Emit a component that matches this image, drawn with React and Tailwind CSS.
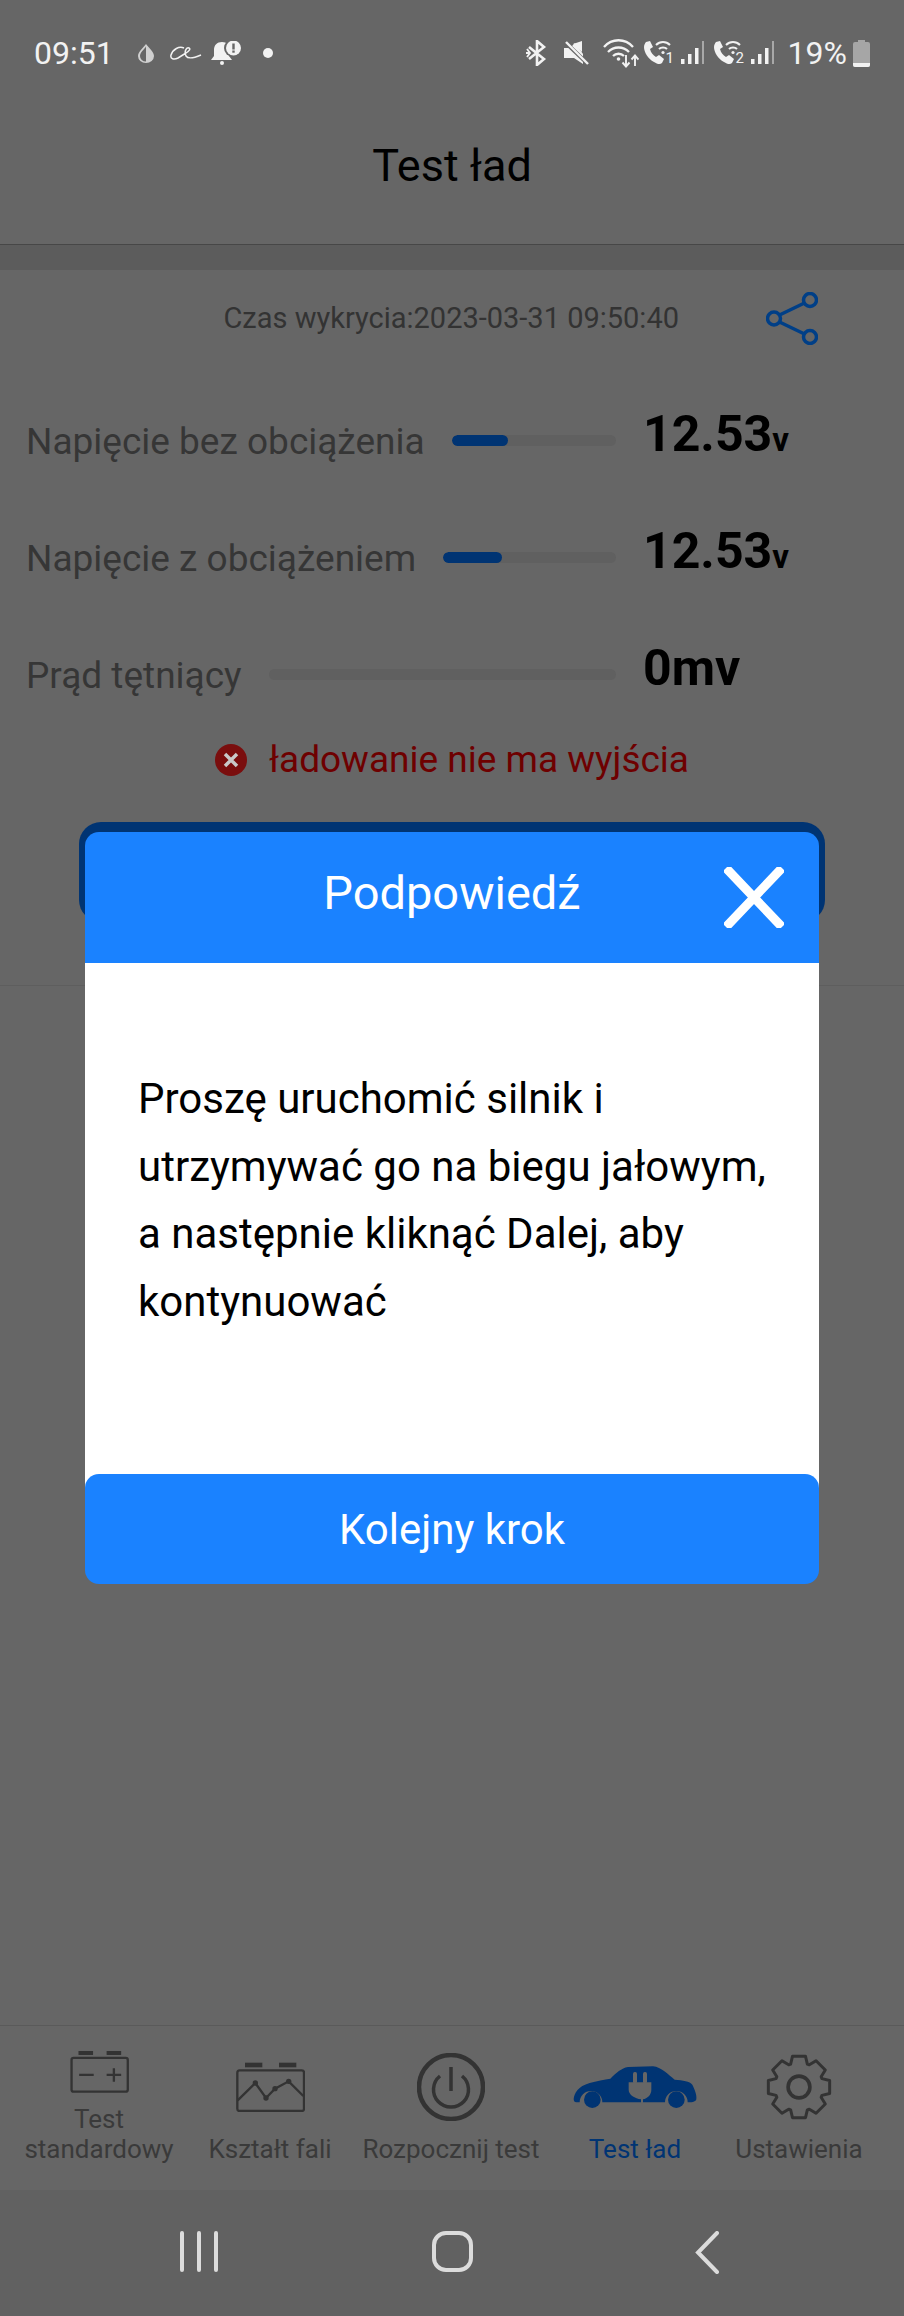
import React from 'react';

// gear outline, 8 teeth, in the coords of the icon's viewBox
const gearPoints = Array.from({ length: 8 }, (_, i) => {
  const a = i * 45 - 90;
  return [[a - 20, 74], [a - 12, 95], [a + 12, 95], [a + 20, 74]]
    .map(([d, r]) => {
      const t = (d * Math.PI) / 180;
      return `${(960 + r * Math.cos(t)).toFixed(1)},${(140 + r * Math.sin(t)).toFixed(1)}`;
    })
    .join(' ');
}).join(' ');

function Bluetooth() {
  return (
    <svg width="22" height="26" viewBox="0 0 22 26" fill="none" stroke="#f2f2f2" strokeWidth="2.6">
      <path d="M3 7l15 12-7 6V1l7 6L3 19" />
      <path d="M0 13h4M1 9l3 4-3 4" strokeWidth="1.8" />
    </svg>
  );
}

function Mute() {
  return (
    <svg width="26" height="24" viewBox="0 0 26 24">
      <path d="M1 7h6l5-5 8 11v10l-9-6H1z" fill="#f2f2f2" />
      <path d="M10 3l9-3v11z" fill="#f2f2f2" />
      <path d="M2 1l23 22" stroke="#666666" strokeWidth="4" />
      <path d="M3 1l22 22" stroke="#f2f2f2" strokeWidth="2.4" />
    </svg>
  );
}

function WifiArrows() {
  return (
    <svg width="36" height="30" viewBox="0 0 36 30" fill="none" stroke="#f2f2f2" strokeWidth="2.3">
      <path d="M1 9c8-9 21-9 29 0M5 14c6-6 15-6 21 0M10 18c3-3 8-3 11 0" />
      <circle cx="15.5" cy="21" r="1.8" fill="#f2f2f2" stroke="none" />
      <path d="M23 17v11M19.5 24.500l3.500 4 3.500-4M32 28V18M28.500 21.500l3.500-4 3.500 4" strokeWidth="1.9" />
    </svg>
  );
}

function WifiCall({ n }) {
  return (
    <div className="relative w-[30px] h-[24px]">
      <svg width="30" height="24" viewBox="0 0 30 24" fill="none">
        <path d="M3 1l4-1 3 6-3 2c1 4 3 6 6 8l3-2 5 4-2 4c-2 2-5 1-8-1C5 18 1 11 1 6c0-2 1-4 2-5z" fill="#f2f2f2" />
        <path d="M13 4c4-4 10-4 14 0M16 8c2-2 6-2 8 0" stroke="#f2f2f2" strokeWidth="2" />
        <circle cx="20" cy="11.500" r="1.600" fill="#f2f2f2" />
      </svg>
      <span className="absolute left-[23px] top-[8px] text-[15px] leading-[18px] text-[#f2f2f2]">{n}</span>
    </div>
  );
}

function Signal() {
  return (
    <svg width="23" height="24" viewBox="0 0 23 24" fill="#f2f2f2">
      <rect x="0" y="18" width="3.500" height="5" />
      <rect x="7" y="13" width="3.500" height="10" />
      <rect x="14" y="7" width="3.500" height="16" />
      <rect x="21" y="0" width="2" height="23" fill="#a8a8a8" />
    </svg>
  );
}

function StatusBar() {
  return (
    <div className="h-[104px] shrink-0 pl-[34px] pr-[34px] pt-[35px] flex items-start justify-between text-[#f2f2f2]">
      <div className="flex items-center h-[36px]">
        <span className="text-[32px] leading-[36px]">09:51</span>
        <svg className="ml-[24px]" width="16" height="19" viewBox="0 0 16 19">
          <path d="M8 0c3 4 8 8 8 12a8 7 0 0 1-16 0C0 8 5 4 8 0z" fill="#d0d0d0" />
          <path d="M8 2.500c-2 3-6 6-6 9.500a6 5.500 0 0 0 6 5.500z" fill="#666666" />
        </svg>
        <svg className="ml-[16px]" width="32" height="16" viewBox="0 0 32 16" fill="none" stroke="#f2f2f2" strokeWidth="1.500">
          <path d="M14 3C9 1 3 4 1 10c-1 4 3 5 7 3l8-5c3-2 5-4 3-5-3-1-5 4-3 8 2 3 8 2 15-1" />
        </svg>
        <svg className="ml-[9px]" width="32" height="24" viewBox="0 0 32 24" fill="#f2f2f2">
          <path d="M11 1c5 0 7 3 7 8v6l3 4H0l3-4V9c0-5 3-8 8-8z" />
          <circle cx="11" cy="22" r="2" />
          <circle cx="22" cy="7" r="9" fill="#666666" />
          <circle cx="22.500" cy="7" r="7.500" />
          <rect x="21.300" y="2.500" width="2.400" height="6" fill="#666666" />
          <rect x="21.300" y="9.500" width="2.400" height="2.200" fill="#666666" />
        </svg>
        <span className="ml-[20px] w-[10px] h-[10px] rounded-full bg-[#f2f2f2]" />
      </div>
      <div className="flex items-center h-[36px]">
        <Bluetooth />
        <div className="ml-[15px]"><Mute /></div>
        <div className="ml-[14px]"><WifiArrows /></div>
        <div className="ml-[4px]"><WifiCall n="1" /></div>
        <div className="ml-[8px]"><Signal /></div>
        <div className="ml-[9px]"><WifiCall n="2" /></div>
        <div className="ml-[8px]"><Signal /></div>
        <span className="ml-[14px] text-[32px] leading-[36px]">19%</span>
        <svg className="ml-[6px]" width="17" height="27" viewBox="0 0 17 27">
          <path d="M5 0h7v2h3a2 2 0 0 1 2 2v21a2 2 0 0 1-2 2H2a2 2 0 0 1-2-2V4a2 2 0 0 1 2-2h3z" fill="#a6a6a6" />
          <path d="M0 23h17v2a2 2 0 0 1-2 2H2a2 2 0 0 1-2-2z" fill="#f2f2f2" />
        </svg>
      </div>
    </div>
  );
}

function MeasureRow({ label, value, unit, fill }) {
  return (
    <div className="h-[60px] flex items-center pl-[26px]">
      <span className="text-[37px] leading-[44px] mt-[4px] whitespace-nowrap text-[#363636]">{label}</span>
      <div className="ml-[27px] flex-1 h-[11px] rounded-full bg-[#606060] overflow-hidden">
        {fill ? <div className="h-full rounded-full bg-[#003473]" style={{ width: fill }} /> : null}
      </div>
      <div className="w-[288px] pl-[27px] mb-[6px] whitespace-nowrap font-bold text-black text-[50px] leading-[56px]">
        {value}
        <span className="text-[33px]">{unit}</span>
      </div>
    </div>
  );
}

function BatteryIcon() {
  return (
    <svg width="59" height="43" viewBox="55 30 177 130" fill="none" stroke="#333333" strokeWidth="7">
      <rect x="80" y="33" width="44" height="12" fill="#333333" stroke="none" />
      <rect x="165" y="33" width="44" height="12" fill="#333333" stroke="none" />
      <rect x="59" y="54" width="170" height="102" rx="6" />
      <path d="M82 105h44M165 105h44M187 85v41" />
    </svg>
  );
}

function WaveIcon() {
  return (
    <svg width="69" height="50" viewBox="555 65 207 150" fill="none" stroke="#333333" strokeWidth="7">
      <rect x="582" y="67" width="52" height="14" fill="#333333" stroke="none" />
      <rect x="684" y="67" width="52" height="14" fill="#333333" stroke="none" />
      <rect x="559" y="90" width="200" height="122" rx="7" />
      <path d="M560 180l53-52 32 45 27-28 41-22 44 44" />
      <g fill="#333333" stroke="none">
        <circle cx="613" cy="128" r="8" />
        <circle cx="645" cy="173" r="8" />
        <circle cx="672" cy="145" r="8" />
        <circle cx="713" cy="123" r="8" />
      </g>
    </svg>
  );
}

function PowerIcon() {
  return (
    <svg width="68" height="68" viewBox="0 0 68 68" fill="none" stroke="#333333">
      <circle cx="34" cy="34" r="32" strokeWidth="4.500" />
      <path d="M23 23a17.500 17.500 0 1 0 22 0" strokeWidth="3.500" />
      <path d="M34 14v24" strokeWidth="3.500" />
    </svg>
  );
}

function CarIcon() {
  return (
    <svg width="124" height="43" viewBox="280 79 372 129">
      <path
        d="M282 178c2-18 13-38 48-48 20-6 45-10 62-13 18-17 33-32 53-35l75-2c25 2 45 25 65 40 25 2 45 4 53 15 7 15 14 30 12 43 0 7-10 10-25 10h-1a34 34 0 0 0-68 0H368a34 34 0 0 0-68 0h-10c-5 0-8-4-8-10z"
        fill="#003473"
      />
      <circle cx="338" cy="180" r="25" fill="#003473" />
      <circle cx="590" cy="180" r="25" fill="#003473" />
      <g fill="#666666">
        <rect x="460" y="97" width="12" height="34" rx="5" />
        <rect x="490" y="97" width="12" height="34" rx="5" />
        <path d="M447 128h68v22c0 16-12 26-25 29v12h-6v-12c-18-3-37-13-37-29z" />
      </g>
    </svg>
  );
}

function GearIcon() {
  return (
    <svg width="66" height="66" viewBox="860 40 200 200" fill="none" stroke="#333333">
      <polygon points={gearPoints} strokeWidth="9" strokeLinejoin="round" />
      <circle cx="960" cy="140" r="33" strokeWidth="11" />
    </svg>
  );
}

const tabs = [
  { label: 'Kształt fali', Icon: WaveIcon, width: 'w-[144px]' },
  { label: 'Rozpocznij test', Icon: PowerIcon, width: 'w-[218px]' },
  { label: 'Test ład', Icon: CarIcon, width: 'w-[150px]', active: true },
  { label: 'Ustawienia', Icon: GearIcon, width: 'w-[178px]' },
];

function TabBar() {
  return (
    <div className="h-[165px] shrink-0 border-t border-[#5a5a5a] flex items-end pb-[26px] text-[26px] leading-[30px] text-[#3a3a3a]">
      <div className="w-[198px] flex flex-col items-center">
        <BatteryIcon />
        <span className="mt-[11px] text-center">Test<br />standardowy</span>
      </div>
      {tabs.map(({ label, Icon, width, active }) => (
        <div key={label} className={`${width} flex flex-col items-center`}>
          <div className="h-[68px] flex items-center justify-center"><Icon /></div>
          <span className={`mt-[13px] whitespace-nowrap ${active ? 'text-[#003473]' : ''}`}>{label}</span>
        </div>
      ))}
    </div>
  );
}

function SystemNav() {
  return (
    <div className="h-[126px] shrink-0 bg-[#616161] flex items-start pt-[41px] pl-[180px]">
      <svg width="38" height="41" viewBox="0 0 38 41" stroke="#dcdcdc" strokeWidth="4" strokeLinecap="round">
        <path d="M2 2v37M19 2v37M36 2v37" />
      </svg>
      <svg className="ml-[214px]" width="41" height="41" viewBox="0 0 41 41" fill="none" stroke="#dcdcdc" strokeWidth="4">
        <rect x="2" y="2" width="37" height="37" rx="12" />
      </svg>
      <svg className="ml-[222px]" width="24" height="43" viewBox="0 0 24 43" fill="none" stroke="#dcdcdc" strokeWidth="4" strokeLinecap="round">
        <path d="M22 2L3 21.500 22 41" />
      </svg>
    </div>
  );
}

function HintModal() {
  return (
    <div className="absolute left-[85px] top-[832px] w-[734px]">
      <div className="relative h-[131px] rounded-t-[14px] bg-[#1a82ff] flex items-center justify-center text-white text-[47px] leading-[52px] pb-[10px]">
        Podpowiedź
        <svg className="absolute left-[639px] top-[35px]" width="60" height="61" viewBox="0 0 60 61" stroke="#ffffff" strokeWidth="9">
          <path d="M2 1l56 59M58 1L2 60" />
        </svg>
      </div>
      <div className="h-[525px] -mb-[14px] bg-white pl-[53px] pr-[40px] pt-[102px] text-[42px] leading-[67.500px] text-black">
        Proszę uruchomić silnik i utrzymywać go na biegu jałowym, a następnie kliknąć Dalej, aby kontynuować
      </div>
      <div className="relative h-[110px] rounded-[14px] bg-[#1a82ff] flex items-center justify-center pt-[2px] text-white text-[42px] leading-[50px]">
        Kolejny krok
      </div>
    </div>
  );
}

export default function App() {
  return (
    <div className="relative w-[904px] h-[2316px] flex flex-col overflow-hidden bg-[#666666] font-['Roboto',sans-serif]">
      <StatusBar />
      <div className="h-[141px] shrink-0 border-b border-[#474747] flex items-center justify-center pb-[17px] text-[45px] leading-[52px] text-black">
        Test ład
      </div>
      <div className="h-[25px] shrink-0 bg-[#5c5c5c]" />

      <div className="shrink-0 border-b border-[#5e5e5e] pb-[63px]">
        <div className="flex items-center justify-end pt-[22px] pr-[86px] gap-[87px]">
          <span className="text-[29px] leading-[34px] -mt-[2px] text-[#333333]">Czas wykrycia:2023-03-31 09:50:40</span>
          <svg width="52" height="53" viewBox="0 0 52 53" fill="none" stroke="#003f87" strokeWidth="3.500">
            <circle cx="44" cy="8" r="6.500" />
            <circle cx="44" cy="45" r="6.500" />
            <circle cx="8" cy="26.500" r="6.500" />
            <path d="M13.500 23l25-12M13.500 30l25 12" />
          </svg>
        </div>
        <div className="mt-[65px] flex flex-col gap-[57px]">
          <MeasureRow label="Napięcie bez obciążenia" value="12.53" unit="v" fill="34%" />
          <MeasureRow label="Napięcie z obciążeniem" value="12.53" unit="v" fill="34%" />
          <MeasureRow label="Prąd tętniący" value="0mv" />
        </div>
        <div className="mt-[40px] h-[32px] flex items-center justify-center gap-[22px]">
          <svg width="32" height="32" viewBox="0 0 32 32">
            <circle cx="16" cy="16" r="16" fill="#7a0e0e" />
            <path d="M10 10l12 12M22 10L10 22" stroke="#c9c9c9" strokeWidth="3.500" />
          </svg>
          <span className="text-[37px] leading-[44px] text-[#6e0000]">ładowanie nie ma wyjścia</span>
        </div>
        <div className="mt-[46px] mx-[79px] h-[100px] rounded-[22px] bg-[#003473]" />
      </div>

      <div className="flex-1" />
      <TabBar />
      <SystemNav />
      <HintModal />
    </div>
  );
}
